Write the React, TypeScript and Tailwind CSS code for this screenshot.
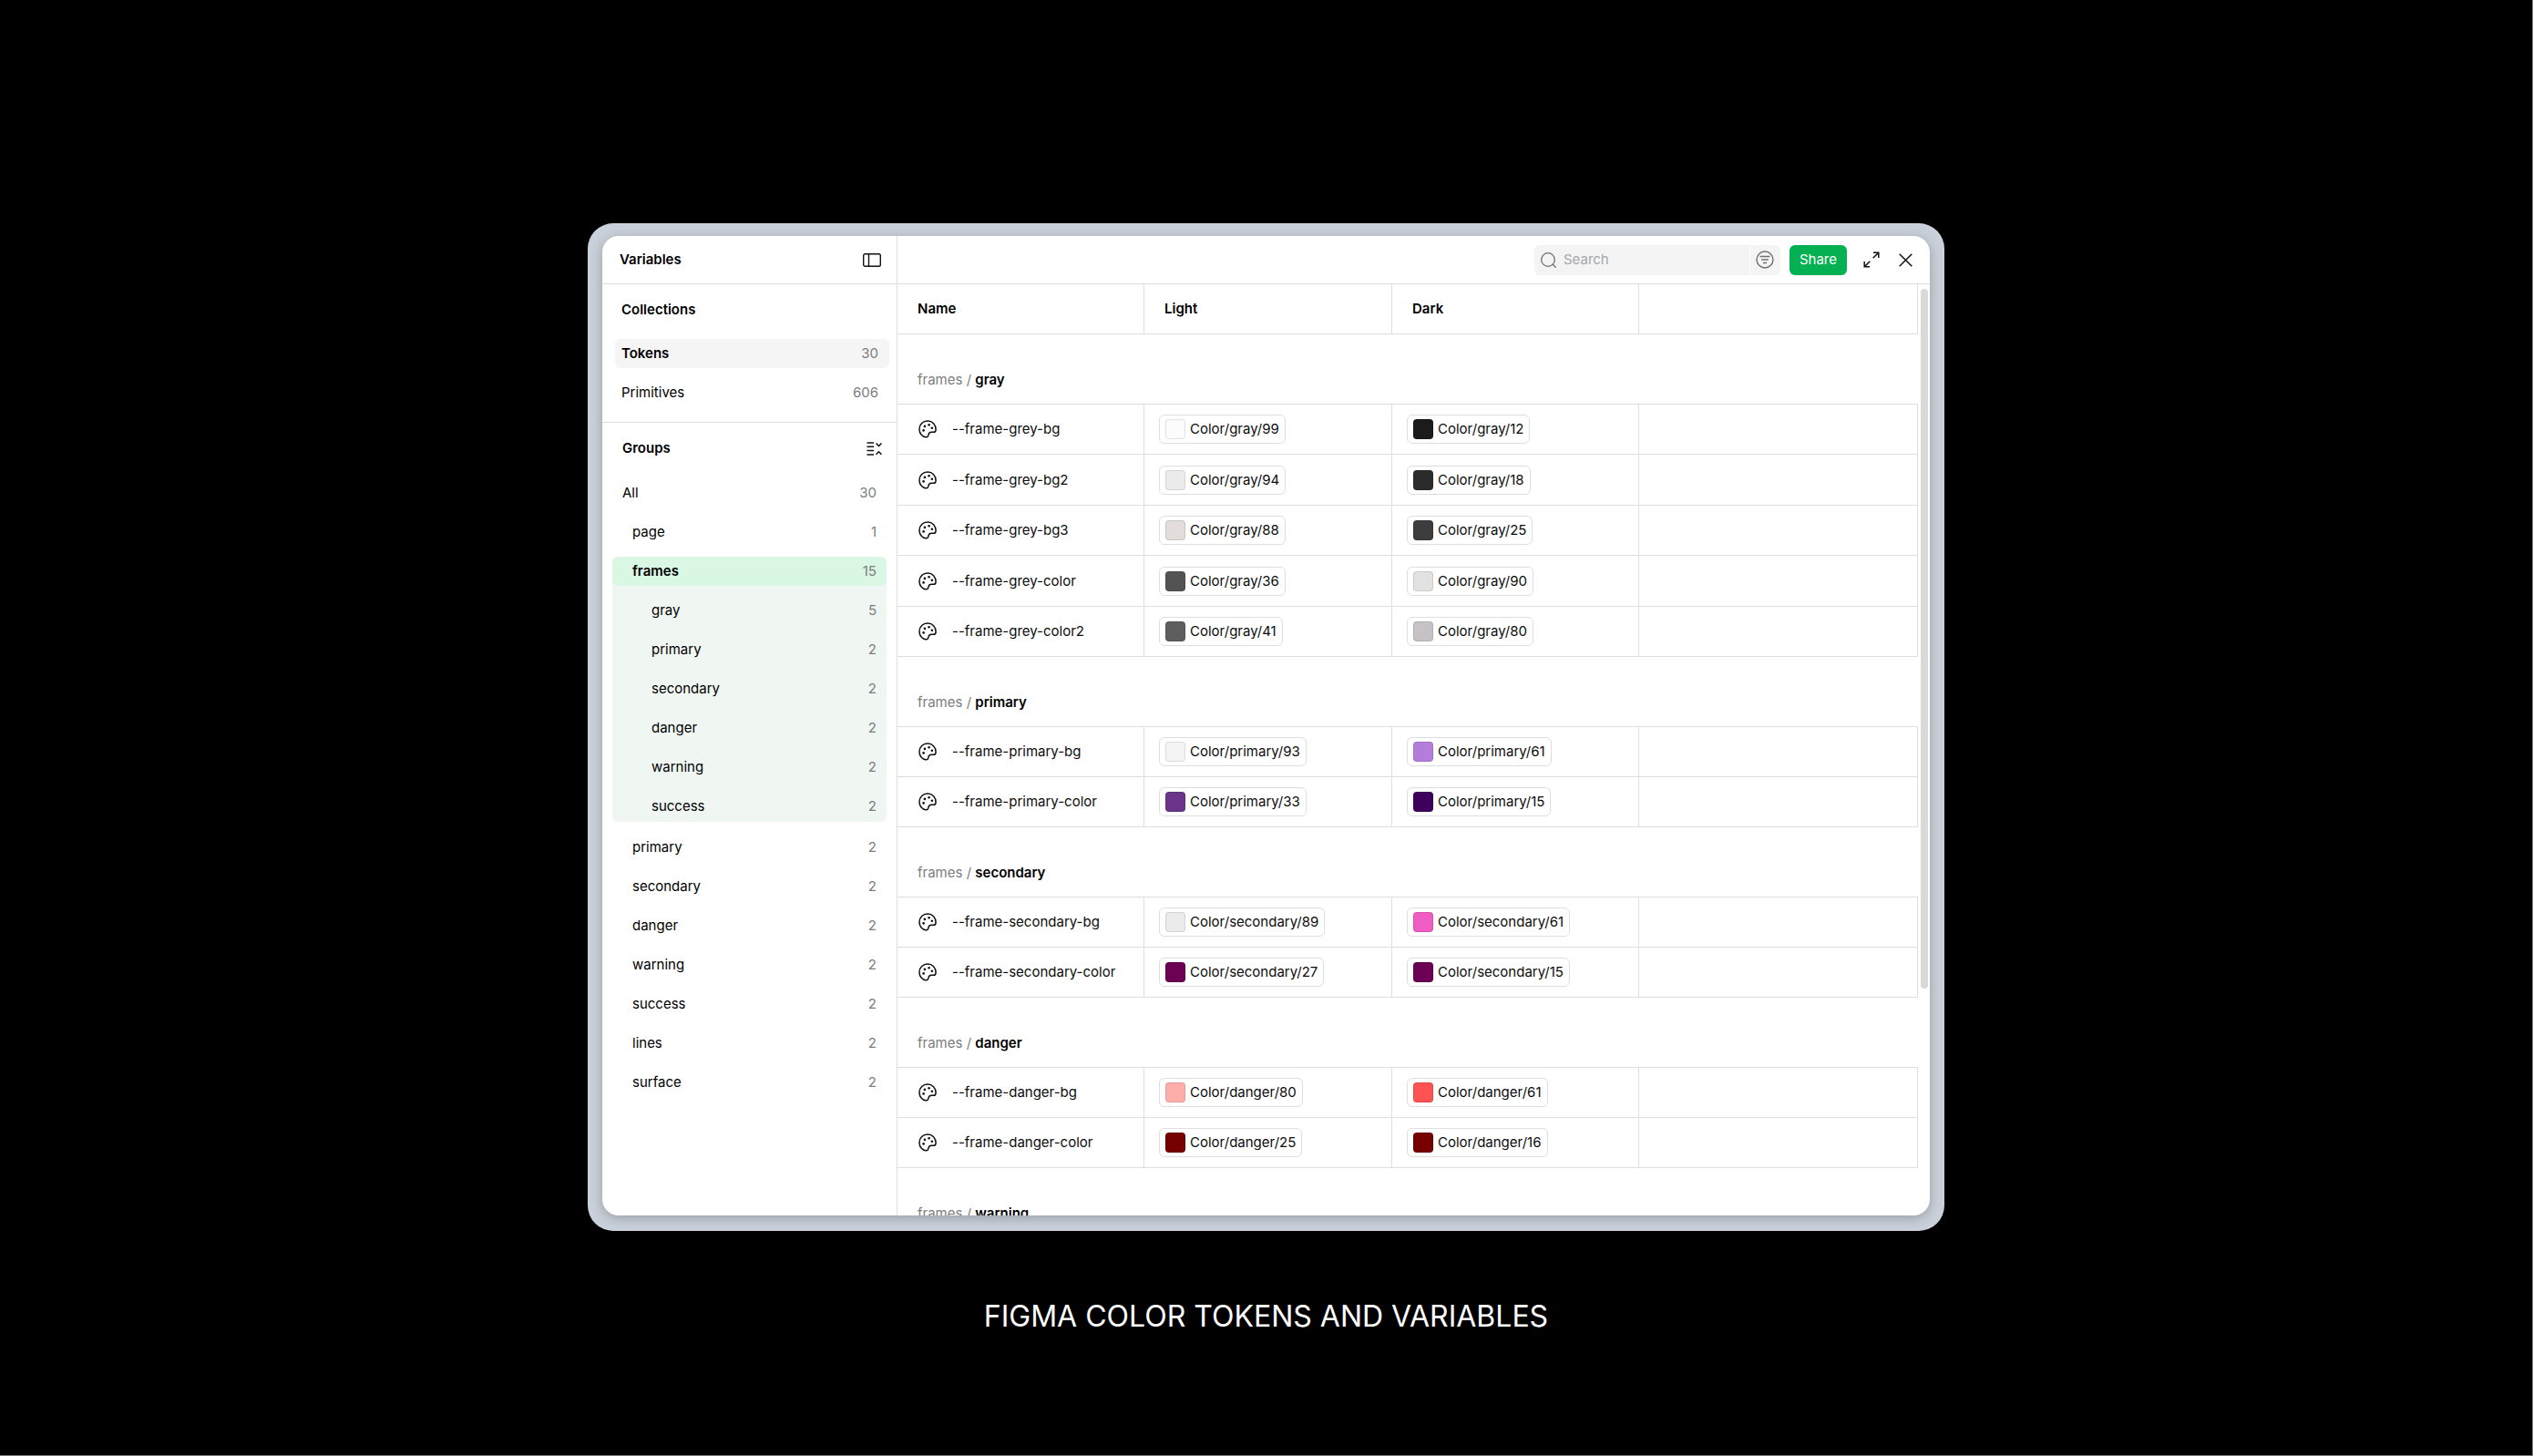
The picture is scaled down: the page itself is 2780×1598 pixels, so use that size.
import React from "react";

type Row = [string, string, string, string, string];
type Section = { title: string; rows: Row[] };

const sections: Section[] = [
  {
    title: "gray",
    rows: [
      ["--frame-grey-bg", "Color/gray/99", "#fcfcfc", "Color/gray/12", "#1b1b1b"],
      ["--frame-grey-bg2", "Color/gray/94", "#ebebeb", "Color/gray/18", "#2b2b2b"],
      ["--frame-grey-bg3", "Color/gray/88", "#e2dcdb", "Color/gray/25", "#3c3c3c"],
      ["--frame-grey-color", "Color/gray/36", "#535353", "Color/gray/90", "#e4e1e1"],
      ["--frame-grey-color2", "Color/gray/41", "#5e5e5e", "Color/gray/80", "#c6c2c5"],
    ],
  },
  {
    title: "primary",
    rows: [
      ["--frame-primary-bg", "Color/primary/93", "#f4f4f4", "Color/primary/61", "#b57ddb"],
      ["--frame-primary-color", "Color/primary/33", "#6b358b", "Color/primary/15", "#3e005c"],
    ],
  },
  {
    title: "secondary",
    rows: [
      ["--frame-secondary-bg", "Color/secondary/89", "#ebebeb", "Color/secondary/61", "#f05cc4"],
      ["--frame-secondary-color", "Color/secondary/27", "#6b0055", "Color/secondary/15", "#6b0055"],
    ],
  },
  {
    title: "danger",
    rows: [
      ["--frame-danger-bg", "Color/danger/80", "#fdaeab", "Color/danger/61", "#ff5252"],
      ["--frame-danger-color", "Color/danger/25", "#760000", "Color/danger/16", "#760000"],
    ],
  },
  { title: "warning", rows: [] },
];

function PaletteIcon() {
  return (
    <svg width="20" height="20" viewBox="0 0 20 20" fill="none" stroke="#111" strokeWidth="1.5" aria-hidden="true">
      <path
        strokeLinejoin="round"
        d="M10.200 1C5.100 1 1 4.900 1 9.900c0 4.900 3.300 8.500 7 8.900 1.900.2 2.700-.7 2.900-2.300.3-2.200 1.100-3.200 3.300-3.200h2.400c1.600 0 2.500-1 2.500-2.900C19.100 5.100 15.300 1 10.200 1Z"
      />
      <g fill="#111" stroke="none">
        <circle cx="5.600" cy="11.400" r="1.300" />
        <circle cx="6.900" cy="6.900" r="1.300" />
        <circle cx="11.600" cy="5.200" r="1.300" />
        <circle cx="14.900" cy="8.800" r="1.300" />
      </g>
    </svg>
  );
}

function Chip({ label, color }: { label: string; color: string }) {
  return (
    <span className="inline-flex h-8 items-center gap-[5px] rounded-md border border-[#dedede] bg-white px-1.5 align-middle">
      <span className="size-[22px] rounded-[4px] border border-black/10" style={{ backgroundColor: color }} />
      <span>{label}</span>
    </span>
  );
}

function Item({ label, count, className, bold }: { label: string; count: number; className: string; bold?: boolean }) {
  return (
    <li>
      <button type="button" className={`flex h-8 w-full items-center justify-between rounded-md ${className}`}>
        <span className={bold ? "font-semibold" : "font-normal"}>{label}</span>
        <span className="text-[#7d7d7d]">{count}</span>
      </button>
    </li>
  );
}

function Sidebar() {
  const nested: [string, number][] = [
    ["gray", 5],
    ["primary", 2],
    ["secondary", 2],
    ["danger", 2],
    ["warning", 2],
    ["success", 2],
  ];
  const rest = ["primary", "secondary", "danger", "warning", "success", "lines", "surface"];
  return (
    <aside className="flex w-[324px] shrink-0 flex-col border-r border-[#dedede] text-black">
      <div className="flex h-[53px] items-center justify-between border-b border-[#dedede] pr-[17px] pl-[19px]">
        <h1 className="font-semibold">Variables</h1>
        <button type="button" aria-label="Toggle sidebar">
          <svg width="20" height="15" viewBox="0 0 20 15" fill="none" stroke="#111" strokeWidth="1.400" aria-hidden="true">
            <rect x=".7" y=".7" width="18.600" height="13.600" rx="1.800" />
            <path d="M6.500 .7v13.600" />
          </svg>
        </button>
      </div>
      <section className="border-b border-[#dedede] pr-2 pb-4 pl-3.5">
        <h2 className="flex h-14 items-center pl-[7px] font-semibold">Collections</h2>
        <ul className="flex flex-col gap-[11px] pt-1">
          <Item label="Tokens" count={30} bold className="bg-[#f5f5f5] pr-3 pl-[7px]" />
          <Item label="Primitives" count={606} className="pr-3 pl-[7px]" />
        </ul>
      </section>
      <section className="px-[11px]">
        <div className="flex h-14 items-center justify-between pr-[5px] pl-[11px]">
          <h2 className="font-semibold">Groups</h2>
          <button type="button" aria-label="Collapse groups">
            <svg width="17" height="15" viewBox="0 0 17 15" fill="none" stroke="#111" strokeWidth="1.500" aria-hidden="true">
              <path d="M.5 1h7.500M.5 5.300h7.500M.5 9.600h7.500M.5 14h7.500M10.500 1.500l3 3 3-3M10.500 13.800l3-3 3 3" />
            </svg>
          </button>
        </div>
        <ul className="flex flex-col gap-[11px] pt-[5px]">
          <Item label="All" count={30} className="pr-[11px] pl-[11px]" />
          <Item label="page" count={1} className="pr-[11px] pl-[22px]" />
          <li className="mb-px rounded-md bg-[#f0f7f3] pb-px">
            <ul className="flex flex-col gap-[11px]">
              <Item label="frames" count={15} bold className="bg-[#d9f7e3] pr-[11px] pl-[22px]" />
              {nested.map(([label, count]) => (
                <Item key={label} label={label} count={count} className="pr-[11px] pl-[43px]" />
              ))}
            </ul>
          </li>
          {rest.map((label) => (
            <Item key={label} label={label} count={2} className="pr-[11px] pl-[22px]" />
          ))}
        </ul>
      </section>
    </aside>
  );
}

function Toolbar() {
  return (
    <header className="flex h-[53px] shrink-0 items-center justify-end border-b border-[#dedede] pr-[19px]">
      <label className="flex h-[33px] w-[236px] items-center gap-2 rounded-l-md bg-[#f4f4f4] pl-[7px]">
        <svg width="17" height="17" viewBox="0 0 17 17" fill="none" stroke="#6f6f6f" strokeWidth="1.300" className="shrink-0" aria-hidden="true">
          <circle cx="8" cy="8" r="7.300" />
          <path d="M13 13l3.700 3.700" />
        </svg>
        <input
          type="text"
          aria-label="Search"
          placeholder="Search"
          className="w-full min-w-0 bg-transparent outline-none placeholder:text-[#a3a7ae]"
        />
      </label>
      <button type="button" aria-label="Filter" className="ml-px flex h-[33px] w-[33px] items-center justify-center rounded-r-md bg-[#f4f4f4]">
        <svg width="20" height="20" viewBox="0 0 20 20" fill="none" stroke="#6f6f6f" strokeWidth="1.400" aria-hidden="true">
          <circle cx="10" cy="10" r="9" />
          <path d="M4.500 6.500h11M6.200 10h7.600M8 13.500h4" />
        </svg>
      </button>
      <button type="button" className="ml-2.5 h-[33px] rounded-md bg-[#04b152] px-[11px] text-white">
        Share
      </button>
      <button type="button" aria-label="Expand" className="ml-[18px]">
        <svg width="18" height="18" viewBox="0 0 18 18" fill="none" stroke="#111" strokeWidth="1.500" aria-hidden="true">
          <path d="M11 1.200h5.800V7M16.500 1.500 10.700 7.300M1.200 11v5.800H7M1.500 16.500l5.800-5.800" />
        </svg>
      </button>
      <button type="button" aria-label="Close" className="ml-[21px]">
        <svg width="15" height="15" viewBox="0 0 15 15" fill="none" stroke="#111" strokeWidth="1.500" aria-hidden="true">
          <path d="M.7.7l13.600 13.600M14.300.7.7 14.300" />
        </svg>
      </button>
    </header>
  );
}

function VariablesTable() {
  return (
    <div className="relative min-h-0 flex-1 overflow-hidden pr-[13px]">
      <table className="w-full table-fixed border-separate border-spacing-0 text-left text-[#0c0c0c]">
        <colgroup>
          <col className="w-[271px]" />
          <col className="w-[272px]" />
          <col className="w-[271px]" />
          <col />
        </colgroup>
        <thead>
          <tr className="h-[55px] text-black *:border-r *:border-b *:border-[#dedede] *:p-0 *:font-semibold">
            <th scope="col"><span className="pl-[22px]">Name</span></th>
            <th scope="col"><span className="pl-[22px]">Light</span></th>
            <th scope="col"><span className="pl-[22px]">Dark</span></th>
            <td />
          </tr>
        </thead>
        {sections.map((section) => (
          <tbody key={section.title}>
            <tr className="h-[77px]">
              <th scope="rowgroup" colSpan={4} className="border-b border-[#dedede] p-0 pb-4 pl-[22px] align-bottom font-normal text-[#7d7d7d]">
                frames / <span className="font-semibold text-black">{section.title}</span>
              </th>
            </tr>
            {section.rows.map(([name, light, lightColor, dark, darkColor], i) => (
              <tr
                key={name}
                className={`${i === 1 && section.rows.length > 2 ? "h-14" : i === 3 ? "h-14" : "h-[55px]"} *:border-r *:border-b *:border-[#dedede] *:p-0`}
              >
                <th scope="row" className="font-normal">
                  <span className="flex items-center gap-[17px] pl-[23px] whitespace-nowrap">
                    <PaletteIcon />
                    {name}
                  </span>
                </th>
                <td><span className="pl-4"><Chip label={light} color={lightColor} /></span></td>
                <td><span className="pl-4"><Chip label={dark} color={darkColor} /></span></td>
                <td />
              </tr>
            ))}
          </tbody>
        ))}
      </table>
      <div className="absolute top-[5px] right-0.5 h-[768px] w-2 rounded-full bg-[#d8dad9]" />
    </div>
  );
}

export default function App() {
  return (
    <div className="flex min-h-screen flex-col items-center border-r border-b border-[#777] bg-black pt-[245px] font-['Inter',sans-serif] text-[15px] leading-5 text-black">
      <main className="w-full max-w-[1489px] rounded-[28px] bg-[#cbd1da] pt-3.5 pr-4 pb-[17px] pl-4">
        <div className="flex h-[1075px] overflow-hidden rounded-[18px] bg-white shadow-[0_3px_14px_rgba(0,0,0,0.25)]">
          <Sidebar />
          <div className="flex min-w-0 flex-1 flex-col">
            <Toolbar />
            <VariablesTable />
          </div>
        </div>
      </main>
      <p className="mt-[70px] text-[32px] leading-[48px] font-normal text-white">FIGMA COLOR TOKENS AND VARIABLES</p>
    </div>
  );
}
